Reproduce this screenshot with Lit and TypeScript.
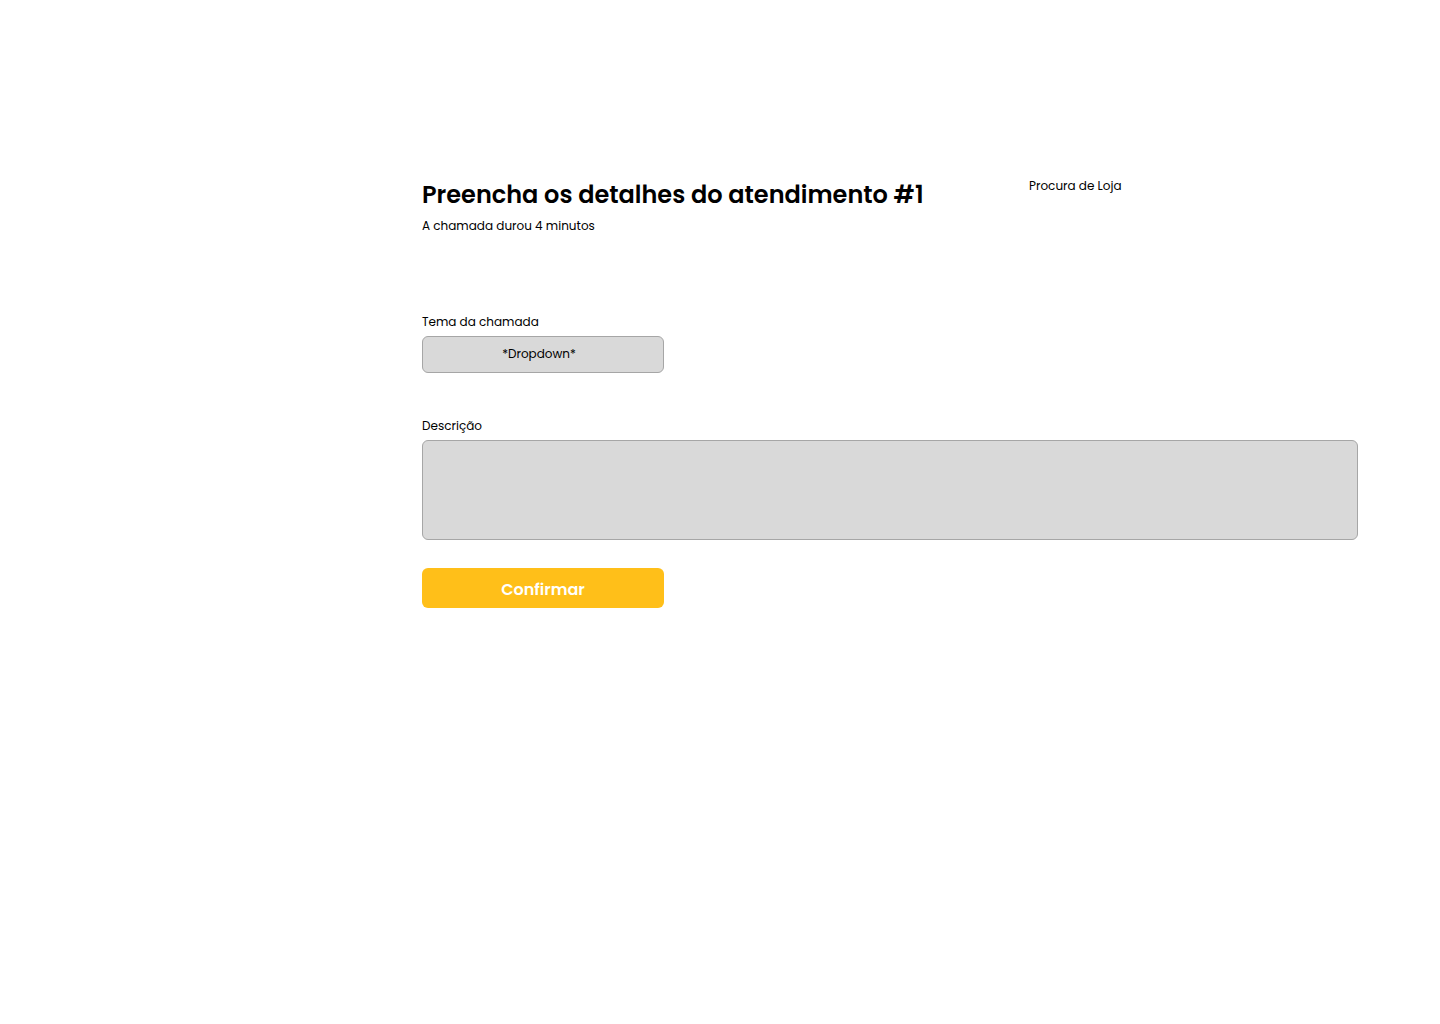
import { LitElement, html, css } from "lit";
import { customElement } from "lit/decorators.js";

@customElement("app-root")
export class AppRoot extends LitElement {
  static styles = css`
    :host {
      display: block;
      background: #fff;
      color: #000;
      font-family: Poppins, Inter, "Open Sans", sans-serif;
      font-size: 12px;
      line-height: 18px;
    }
    *,
    *::before,
    *::after {
      box-sizing: border-box;
    }
    .page {
      padding: 177px 82px 48px 422px;
    }
    .header {
      display: grid;
      grid-template-columns: 607fr 329fr;
      align-items: start;
      margin-bottom: 78px;
    }
    .title {
      margin: 0 0 4px;
      font-size: 24px;
      line-height: 36px;
      font-weight: 600;
    }
    .text {
      margin: 0;
    }
    .form {
      display: flex;
      flex-direction: column;
      align-items: flex-start;
    }
    .field {
      display: flex;
      flex-direction: column;
      gap: 5px;
      max-width: 100%;
    }
    .field.wide {
      width: 100%;
      margin: 44px 0 28px;
    }
    .control {
      display: block;
      margin: 0;
      color: inherit;
      font: inherit;
      background: #d9d9d9;
      border: 1px solid #a6a6a6;
      border-radius: 6px;
    }
    .select {
      appearance: none;
      width: 242px;
      max-width: 100%;
      height: 37px;
      padding: 0 8px 2px 0;
      text-align: center;
      text-align-last: center;
    }
    .textarea {
      width: 100%;
      height: 100px;
      padding: 8px 12px;
      resize: none;
    }
    .confirm {
      width: 242px;
      max-width: 100%;
      height: 40px;
      padding: 4px 0 0;
      border: 0;
      border-radius: 6px;
      background: #ffbf19;
      color: #fff;
      font: inherit;
      font-size: 16px;
      line-height: 24px;
      font-weight: 600;
      cursor: pointer;
    }
  `;

  render() {
    return html`
      <main class="page">
        <header class="header">
          <div>
            <h1 class="title">Preencha os detalhes do atendimento #1</h1>
            <p class="text">A chamada durou 4 minutos</p>
          </div>
          <p class="text">Procura de Loja</p>
        </header>
        <form class="form" @submit=${(e: Event) => e.preventDefault()}>
          <div class="field">
            <label for="topic">Tema da chamada</label>
            <select class="control select" id="topic">
              <option>*Dropdown*</option>
            </select>
          </div>
          <div class="field wide">
            <label for="description">Descrição</label>
            <textarea class="control textarea" id="description"></textarea>
          </div>
          <button class="confirm" type="submit">Confirmar</button>
        </form>
      </main>
    `;
  }
}
